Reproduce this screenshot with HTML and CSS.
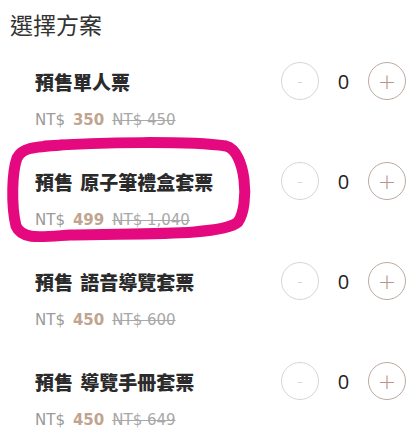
FILE: index.html
```html
<!DOCTYPE html>
<html lang="zh-Hant">
<head>
<meta charset="utf-8">
<link rel="stylesheet" href="styles.css">
</head>
<body>
<div class="page">
  <h2 class="title">選擇方案</h2>
  <div class="plans">
    <div class="plan">
      <div class="plan-head">
        <div class="plan-name">預售單人票</div>
        <div class="qty">
          <button class="btn minus">-</button>
          <span class="count">0</span>
          <button class="btn plus">+</button>
        </div>
      </div>
      <div class="price"><span class="cur">NT$</span><span class="now">350</span><span class="old">NT$ 450</span></div>
    </div>
    <div class="plan">
      <div class="plan-head">
        <div class="plan-name">預售 原子筆禮盒套票</div>
        <div class="qty">
          <button class="btn minus">-</button>
          <span class="count">0</span>
          <button class="btn plus">+</button>
        </div>
      </div>
      <div class="price"><span class="cur">NT$</span><span class="now">499</span><span class="old">NT$ 1,040</span></div>
    </div>
    <div class="plan">
      <div class="plan-head">
        <div class="plan-name">預售 語音導覽套票</div>
        <div class="qty">
          <button class="btn minus">-</button>
          <span class="count">0</span>
          <button class="btn plus">+</button>
        </div>
      </div>
      <div class="price"><span class="cur">NT$</span><span class="now">450</span><span class="old">NT$ 600</span></div>
    </div>
    <div class="plan">
      <div class="plan-head">
        <div class="plan-name">預售 導覽手冊套票</div>
        <div class="qty">
          <button class="btn minus">-</button>
          <span class="count">0</span>
          <button class="btn plus">+</button>
        </div>
      </div>
      <div class="price"><span class="cur">NT$</span><span class="now">450</span><span class="old">NT$ 649</span></div>
    </div>
  </div>
  <svg class="mark" width="418" height="445" viewBox="0 0 418 445" aria-hidden="true">
    <path d="M 45 146 C 100 142, 190 141, 226 146 C 246 151, 250 205, 238 222 C 222 236, 140 233, 70 235 C 40 237, 22 240, 16 226 C 11 205, 12 172, 17 158 C 22 148, 32 147, 62 145"
      fill="none" stroke="#e5097f" stroke-width="11" stroke-linecap="round" stroke-linejoin="round"/>
  </svg>
</div>
</body>
</html>
```

FILE: styles.css
```css
html, body {
  margin: 0;
  padding: 0;
  background: #fff;
}

.page {
  position: relative;
  width: 418px;
  height: 445px;
  overflow: hidden;
  font-family: "Noto Sans CJK TC", "Noto Sans", sans-serif;
}

.title {
  margin: 0;
  padding: 9px 0 0 10px;
  font-size: 23px;
  line-height: 30px;
  font-weight: 400;
  color: #333;
}

.plans {
  display: flex;
  flex-direction: column;
  padding: 23px 12px 0 35px;
  gap: 32px;
}

.plan {
  display: flex;
  flex-direction: column;
  gap: 10px;
}

.plan-head {
  display: flex;
  align-items: center;
  justify-content: space-between;
  height: 38px;
}

.plan-name {
  font-size: 19px;
  font-weight: 900;
  color: #2b2b2b;
  line-height: 24px;
  padding-top: 2px;
  word-spacing: 3px;
}

.qty {
  display: flex;
  align-items: center;
}

.btn {
  width: 38px;
  height: 38px;
  border-radius: 50%;
  background: #fff;
  padding: 0;
  font-family: "DejaVu Sans", sans-serif;
  font-weight: 300;
  display: flex;
  align-items: center;
  justify-content: center;
}

.minus {
  border: 1px solid #d6d6d6;
  color: #c4c4c4;
  font-size: 16px;
}

.plus {
  border: 1px solid #bcaaa2;
  color: #b8968a;
  font-size: 22px;
}

.count {
  width: 49px;
  text-align: center;
  font-family: "Open Sans", "DejaVu Sans", sans-serif;
  font-size: 20px;
  color: #222;
}

.price {
  font-family: "DejaVu Sans", sans-serif;
  font-size: 15px;
  line-height: 20px;
  color: #9a9a9a;
  display: flex;
  gap: 8px;
}

.cur {
  color: #9a9a9a;
}

.now {
  font-weight: 700;
  color: #c1a48f;
}

.old {
  color: #a8a8a8;
  text-decoration: line-through;
}

.mark {
  position: absolute;
  left: 0;
  top: 0;
  pointer-events: none;
}
```
